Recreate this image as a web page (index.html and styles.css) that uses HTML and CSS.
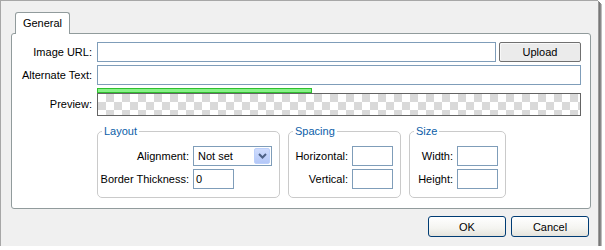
FILE: index.html
```html
<!DOCTYPE html>
<html>
<head>
<meta charset="utf-8">
<link rel="stylesheet" href="styles.css">
</head>
<body>
<div class="window">
  <div class="tabs"><div class="tab">General</div></div>
  <div class="panel">
    <div class="row">
      <label class="lbl">Image URL:</label>
      <div class="input grow"></div>
      <button class="btn-upload">Upload</button>
    </div>
    <div class="row">
      <label class="lbl">Alternate Text:</label>
      <div class="input grow"></div>
    </div>
    <div class="row preview-row">
      <label class="lbl">Preview:</label>
      <div class="preview">
        <div class="progress"></div>
        <div class="checker"></div>
      </div>
    </div>
    <div class="groups">
      <fieldset class="group g-layout">
        <legend>Layout</legend>
        <div class="grid">
          <label>Alignment:</label>
          <div class="select"><span>Not set</span><span class="drop"><svg width="9" height="6" viewBox="0 0 9 6"><path d="M1 1 L4.5 4.5 L8 1" fill="none" stroke="#4d6185" stroke-width="2"/></svg></span></div>
          <label>Border Thickness:</label>
          <div class="input small">0</div>
        </div>
      </fieldset>
      <fieldset class="group g-spacing">
        <legend>Spacing</legend>
        <div class="grid">
          <label>Horizontal:</label>
          <div class="input small"></div>
          <label>Vertical:</label>
          <div class="input small"></div>
        </div>
      </fieldset>
      <fieldset class="group g-size">
        <legend>Size</legend>
        <div class="grid">
          <label>Width:</label>
          <div class="input small"></div>
          <label>Height:</label>
          <div class="input small"></div>
        </div>
      </fieldset>
    </div>
  </div>
  <div class="actions">
    <button class="btn-xp">OK</button>
    <button class="btn-xp">Cancel</button>
  </div>
</div>
</body>
</html>
```

FILE: styles.css
```css
body {
  margin: 0;
  background: #fff;
  font: 11px "Liberation Sans", Arial, sans-serif;
  color: #000;
}

.window {
  width: 598px;
  height: 246px;
  box-sizing: border-box;
  background: #f0f0f0;
  border-left: 1px solid #a7a7a7;
  border-top: 1px solid #a7a7a7;
  padding: 11px 0 0 10px;
  box-shadow: 1px 1px 0 #9a9a9a, 2px 2px 0 #777, 3px 3px 0 #8a8a8a, 4px 4px 0 #bdbdbd;
  display: flex;
  flex-direction: column;
}

.tabs {
  display: flex;
  padding-left: 4px;
  position: relative;
  z-index: 1;
  margin-bottom: -1px;
}

.tab {
  width: 55px;
  height: 22px;
  box-sizing: border-box;
  border: 1px solid #919b9c;
  border-bottom: none;
  border-radius: 3px 3px 0 0;
  background: #fff;
  text-align: center;
  line-height: 20px;
}

.panel {
  width: 580px;
  height: 176px;
  box-sizing: border-box;
  background: #fff;
  border: 1px solid #919b9c;
  border-radius: 3px;
  padding: 8px 9px 0 0;
}

.row {
  display: flex;
  align-items: center;
}

.row + .row {
  margin-top: 3px;
}

.lbl {
  flex: none;
  width: 80px;
  margin-right: 5px;
  text-align: right;
  white-space: nowrap;
}

.input {
  height: 20px;
  box-sizing: border-box;
  border: 1px solid #7f9db9;
  background: #fff;
  line-height: 18px;
  padding-left: 2px;
}

.grow {
  flex: 1;
}

.btn-upload {
  flex: none;
  width: 82px;
  height: 20px;
  margin-left: 3px;
  box-sizing: border-box;
  border: 1px solid #707070;
  border-radius: 2px;
  background: #ebebeb;
  box-shadow: inset 1px 1px 0 #f8f8f8;
  font: inherit;
  color: #000;
  padding: 0;
}

.preview-row {
  align-items: flex-end;
}

.preview-row .lbl {
  line-height: 23px;
}

.preview {
  flex: 1;
  display: flex;
  flex-direction: column;
}

.progress {
  width: 215px;
  height: 5px;
  box-sizing: border-box;
  background: #86f286;
  border: 1px solid #2fbf2f;
}

.checker {
  height: 23px;
  box-sizing: border-box;
  border: 1px solid #646464;
  background-color: #fff;
  background-image: conic-gradient(#d9d9d9 25%, #fff 0 50%, #d9d9d9 0 75%, #fff 0);
  background-size: 16px 16px;
}

.groups {
  display: flex;
  gap: 8px;
  margin: 9px 0 0 85px;
}

.group {
  margin: 0;
  padding: 8px 7px 8px 4px;
  border: 1px solid #cacaca;
  border-radius: 5px;
  box-sizing: border-box;
  min-width: 0;
}

.group legend {
  padding: 0 2px;
  color: #0b5ea8;
  line-height: 13px;
}

.g-layout { width: 183px; }
.g-spacing { width: 113px; }
.g-size { width: 97px; }

.grid {
  display: grid;
  grid-template-columns: max-content max-content;
  justify-content: end;
  column-gap: 4px;
  row-gap: 3px;
  align-items: center;
}

.grid label {
  text-align: right;
  white-space: nowrap;
}

.small {
  width: 41px;
}

.select {
  width: 79px;
  height: 20px;
  box-sizing: border-box;
  border: 1px solid #7f9db9;
  background: #fff;
  display: flex;
  align-items: center;
  padding-left: 4px;
}

.select .drop {
  margin-left: auto;
  margin-right: 1px;
  width: 16px;
  height: 16px;
  box-sizing: border-box;
  border: 1px solid #bcd0fb;
  border-radius: 2px;
  background: linear-gradient(#cfdcfd, #b4c8f8);
  display: flex;
  align-items: center;
  justify-content: center;
}

.actions {
  display: flex;
  justify-content: flex-end;
  gap: 5px;
  margin-top: 7px;
  padding-right: 9px;
}

.btn-xp {
  width: 78px;
  height: 21px;
  box-sizing: border-box;
  border: 1px solid #003c74;
  border-radius: 3px;
  background: linear-gradient(#ffffff, #f4f4f0 60%, #e4e3dc);
  font: inherit;
  color: #000;
  padding: 0;
}
```
